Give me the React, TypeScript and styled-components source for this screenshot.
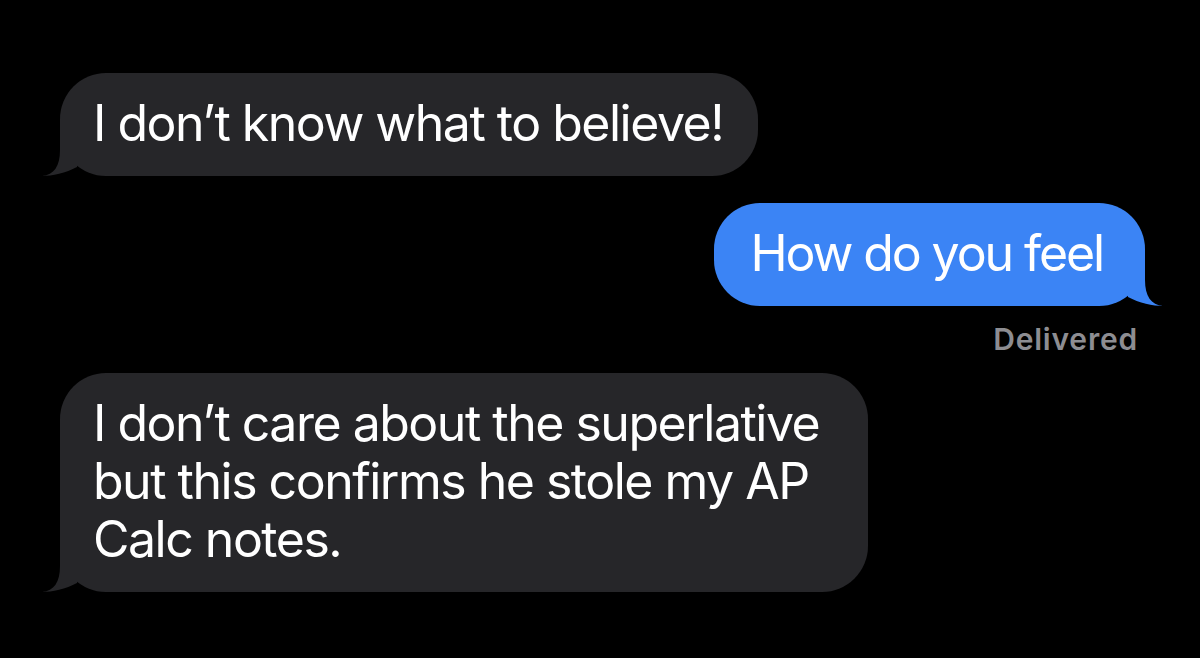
import React from 'react';
import styled, { createGlobalStyle } from 'styled-components';

const Global = createGlobalStyle`
  html, body { margin: 0; padding: 0; background: #000; }
  body { font-family: Inter, "Liberation Sans", Arial, sans-serif; -webkit-font-smoothing: antialiased; }
`;

const Thread = styled.main`
  display: flex;
  flex-direction: column;
  width: 1200px;
  height: 658px;
  box-sizing: border-box;
  padding: 73px 55px 0 60px;
  background: #000;
  overflow: hidden;
`;

const Row = styled.div<{ $out?: boolean; $gap?: number }>`
  display: flex;
  justify-content: ${(p) => (p.$out ? 'flex-end' : 'flex-start')};
  margin-top: ${(p) => p.$gap ?? 0}px;
`;

const Bubble = styled.div<{ $out?: boolean }>`
  position: relative;
  max-width: 808px;
  box-sizing: border-box;
  background: ${(p) => (p.$out ? '#3b84f5' : '#262629')};
  color: #fff;
  font-size: 50px;
  line-height: 58px;
  letter-spacing: ${(p) => (p.$out ? '-2.1px' : '-1.5px')};
  padding: ${(p) => (p.$out ? '21px 42px 24px 36px' : '21px 35px 24px 33px')};
  border-radius: 46px;
`;

const Tail = styled.svg<{ $out?: boolean }>`
  position: absolute;
  bottom: 0;
  width: 56px;
  height: 46px;
  ${(p) => (p.$out ? 'right: -18px; transform: scaleX(-1);' : 'left: -18px;')}
`;

const Text = styled.span`
  position: relative;
`;

const Status = styled.div`
  align-self: flex-end;
  margin: 16px 7px 0 0;
  font-size: 30px;
  line-height: 34px;
  font-weight: 600;
  letter-spacing: 0.8px;
  color: #8d8d92;
`;

function BubbleTail({ out, color }: { out?: boolean; color: string }) {
  return (
    <Tail $out={out} viewBox="0 0 56 46" aria-hidden>
      <path d="M18 0 L18 20 C18 36 12 45 0 46 C10 46 24 43 35 37 L35 0 Z" fill={color} />
    </Tail>
  );
}

function Message({ out, children }: { out?: boolean; children: React.ReactNode }) {
  return (
    <Bubble $out={out}>
      <BubbleTail out={out} color={out ? '#3b84f5' : '#262629'} />
      <Text>{children}</Text>
    </Bubble>
  );
}

export default function App() {
  return (
    <>
      <Global />
      <Thread>
        <Row>
          <Message>I don’t know what to believe!</Message>
        </Row>
        <Row $out $gap={27}>
          <Message out>How do you feel</Message>
        </Row>
        <Status>Delivered</Status>
        <Row $gap={17}>
          <Message>
            I don’t care about the superlative but this confirms he stole my AP Calc notes.
          </Message>
        </Row>
      </Thread>
    </>
  );
}
